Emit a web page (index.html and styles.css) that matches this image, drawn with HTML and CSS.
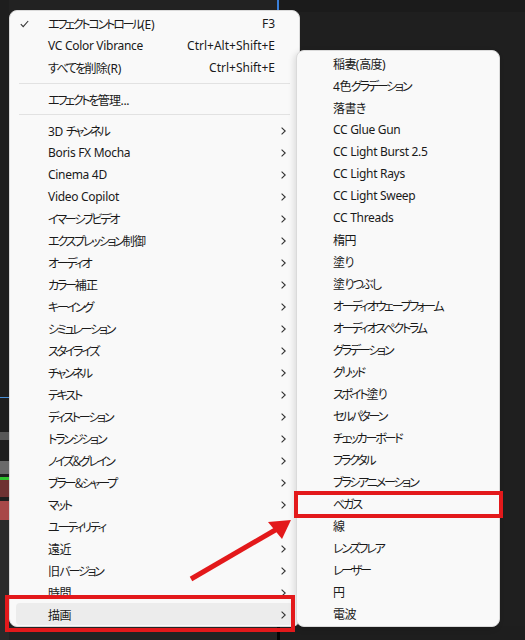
FILE: index.html
```html
<!DOCTYPE html>
<html lang="ja">
<head>
<meta charset="utf-8">
<link rel="stylesheet" href="styles.css">
</head>
<body>
<div class="scene">
  <div class="strip"></div>

  <div class="menu main">
    <div class="item"><span class="check"><svg width="9" height="8" viewBox="0 0 9 8"><polyline points="0.8,4.2 3.2,6.6 8.2,1" fill="none" stroke="#333" stroke-width="1.1"/></svg></span><span class="label">エフェクトコントロール<span class="en">(E)</span></span><span class="key">F3</span></div>
    <div class="item"><span class="check"></span><span class="label en">VC Color Vibrance</span><span class="key">Ctrl+Alt+Shift+E</span></div>
    <div class="item"><span class="check"></span><span class="label"><span class="hr">すべてを</span><span class="kj">削除</span><span class="en">(R)</span></span><span class="key">Ctrl+Shift+E</span></div>
    <div class="sep first"></div>
    <div class="item"><span class="check"></span><span class="label">エフェクト<span class="hr">を</span><span class="kj">管理</span><span class="en">...</span></span></div>
    <div class="sep"></div>
    <div class="item sub"><span class="check"></span><span class="label"><span class="en">3D </span>チャンネル</span><span class="chev"></span></div>
    <div class="item sub"><span class="check"></span><span class="label en">Boris FX Mocha</span><span class="chev"></span></div>
    <div class="item sub"><span class="check"></span><span class="label en">Cinema 4D</span><span class="chev"></span></div>
    <div class="item sub"><span class="check"></span><span class="label en">Video Copilot</span><span class="chev"></span></div>
    <div class="item sub"><span class="check"></span><span class="label">イマーシブビデオ</span><span class="chev"></span></div>
    <div class="item sub"><span class="check"></span><span class="label">エクスプレッション<span class="kj">制御</span></span><span class="chev"></span></div>
    <div class="item sub"><span class="check"></span><span class="label">オーディオ</span><span class="chev"></span></div>
    <div class="item sub"><span class="check"></span><span class="label">カラー<span class="kj">補正</span></span><span class="chev"></span></div>
    <div class="item sub"><span class="check"></span><span class="label">キーイング</span><span class="chev"></span></div>
    <div class="item sub"><span class="check"></span><span class="label">シミュレーション</span><span class="chev"></span></div>
    <div class="item sub"><span class="check"></span><span class="label">スタイライズ</span><span class="chev"></span></div>
    <div class="item sub"><span class="check"></span><span class="label">チャンネル</span><span class="chev"></span></div>
    <div class="item sub"><span class="check"></span><span class="label">テキスト</span><span class="chev"></span></div>
    <div class="item sub"><span class="check"></span><span class="label">ディストーション</span><span class="chev"></span></div>
    <div class="item sub"><span class="check"></span><span class="label">トランジション</span><span class="chev"></span></div>
    <div class="item sub"><span class="check"></span><span class="label">ノイズ＆グレイン</span><span class="chev"></span></div>
    <div class="item sub"><span class="check"></span><span class="label">ブラー＆シャープ</span><span class="chev"></span></div>
    <div class="item sub"><span class="check"></span><span class="label">マット</span><span class="chev"></span></div>
    <div class="item"><span class="check"></span><span class="label">ユーティリティ</span></div>
    <div class="item sub"><span class="check"></span><span class="label"><span class="kj">遠近</span></span><span class="chev"></span></div>
    <div class="item sub"><span class="check"></span><span class="label"><span class="kj">旧</span>バージョン</span><span class="chev"></span></div>
    <div class="item sub"><span class="check"></span><span class="label"><span class="kj">時間</span></span><span class="chev"></span></div>
    <div class="item sub active"><span class="check"></span><span class="label"><span class="kj">描画</span></span><span class="chev"></span></div>
  </div>

  <div class="menu submenu">
    <div class="item"><span class="label"><span class="kj">稲妻</span><span class="en">(</span><span class="kj">高度</span><span class="en">)</span></span></div>
    <div class="item"><span class="label"><span class="en">4</span><span class="kj">色</span>グラデーション</span></div>
    <div class="item"><span class="label"><span class="kj">落書</span><span class="hr">き</span></span></div>
    <div class="item"><span class="label en">CC Glue Gun</span></div>
    <div class="item"><span class="label en">CC Light Burst 2.5</span></div>
    <div class="item"><span class="label en">CC Light Rays</span></div>
    <div class="item"><span class="label en">CC Light Sweep</span></div>
    <div class="item"><span class="label en">CC Threads</span></div>
    <div class="item"><span class="label"><span class="kj">楕円</span></span></div>
    <div class="item"><span class="label"><span class="kj">塗</span><span class="hr">り</span></span></div>
    <div class="item"><span class="label"><span class="kj">塗</span><span class="hr">りつぶし</span></span></div>
    <div class="item"><span class="label">オーディオウェーブフォーム</span></div>
    <div class="item"><span class="label">オーディオスペクトラム</span></div>
    <div class="item"><span class="label">グラデーション</span></div>
    <div class="item"><span class="label">グリッド</span></div>
    <div class="item"><span class="label">スポイト<span class="kj">塗</span><span class="hr">り</span></span></div>
    <div class="item"><span class="label">セルパターン</span></div>
    <div class="item"><span class="label">チェッカーボード</span></div>
    <div class="item"><span class="label">フラクタル</span></div>
    <div class="item"><span class="label">ブラシアニメーション</span></div>
    <div class="item"><span class="label">ベガス</span></div>
    <div class="item"><span class="label"><span class="kj">線</span></span></div>
    <div class="item"><span class="label">レンズフレア</span></div>
    <div class="item"><span class="label">レーザー</span></div>
    <div class="item"><span class="label"><span class="kj">円</span></span></div>
    <div class="item"><span class="label"><span class="kj">電波</span></span></div>
  </div>

  <div class="mark mark-draw"></div>
  <div class="mark mark-vegas"></div>
  <svg class="arrow" width="525" height="640" viewBox="0 0 525 640">
    <line x1="191" y1="579" x2="277" y2="529" stroke="#e3191b" stroke-width="5"/>
    <polygon points="291,520 268,522 282,539" fill="#e3191b"/>
  </svg>
</div>
</body>
</html>
```

FILE: styles.css
```css
* { box-sizing: border-box; }
html, body { margin: 0; padding: 0; }
body {
  width: 525px;
  height: 640px;
  overflow: hidden;
  background: #1f1f1f;
  font-family: "Segoe UI", "Noto Sans", "Noto Sans CJK JP", sans-serif;
  font-size: 12px;
  color: #1a1a1a;
}
.scene {
  position: relative;
  width: 525px;
  height: 640px;
  background:
    linear-gradient(to right, #222 0, #222 277px, #3a7fd8 277px, #3a7fd8 279px, #1b1b1b 279px) top left / 525px 12px no-repeat,
    linear-gradient(to right, #232323 0, #232323 277px, #050505 277px, #050505 280px, #1e1e1e 280px) bottom left / 525px 14px no-repeat,
    #1f1f1f;
}
.strip {
  width: 9px;
  height: 640px;
  background: linear-gradient(to bottom,
    #1e1e1e 0, #1e1e1e 397px, #4a8fd6 397px, #4a8fd6 398px,
    #1e1e1e 398px, #1e1e1e 432px, #575757 432px, #575757 440px,
    #1e1e1e 440px, #1e1e1e 461px, #6a6a6a 461px, #6a6a6a 474px,
    #1e1e1e 474px, #1e1e1e 477px, #2fc12f 477px, #2fc12f 480px,
    #6e3232 480px, #6e3232 497px, #1e1e1e 497px, #1e1e1e 501px,
    #a84848 501px, #a84848 520px, #2a2a2a 520px);
}

.menu {
  position: absolute;
  background: #f9f9f9;
  border: 1px solid #dadada;
  border-radius: 8px;
  display: flex;
  flex-direction: column;
  font-feature-settings: "palt";
}
.main {
  left: 9px;
  top: 10px;
  width: 291px;
  height: 617px;
  padding: 1px 6px;
}
.submenu {
  left: 296px;
  top: 50px;
  width: 204px;
  height: 577px;
  padding: 1px 6px;
  box-shadow: -2px 2px 6px rgba(0,0,0,0.12);
}
.item {
  height: 22px;
  display: flex;
  align-items: center;
  flex: none;
  border-radius: 4px;
  white-space: nowrap;
  padding-top: 1px;
}
.check {
  width: 32px;
  flex: none;
  display: flex;
  justify-content: flex-start;
  padding-left: 4px;
}
.check svg { display: block; }
.label { flex: 1; letter-spacing: -2.2px; }
.label .en, .label.en { letter-spacing: -0.3px; }
.label .kj { letter-spacing: -0.6px; }
.label .hr { letter-spacing: -1.8px; }
.submenu .label { padding-left: 30px; }
.key {
  padding-right: 18px;
  color: #1a1a1a;
}
.chev {
  width: 14px;
  height: 22px;
  flex: none;
  margin-right: 3px;
  background: no-repeat center / 5px 8px url("data:image/svg+xml;utf8,<svg xmlns='http://www.w3.org/2000/svg' width='5' height='8' viewBox='0 0 5 8'><polyline points='0.6,0.6 4.2,4 0.6,7.4' fill='none' stroke='%23333' stroke-width='1.1'/></svg>");
}
.active { background: #ececec; }
.sep {
  flex: none;
  height: 9px;
  padding: 4px 3px;
}
.sep::after {
  content: "";
  display: block;
  height: 1px;
  background: #e2e2e2;
}
.sep.first { height: 10px; padding-top: 5px; }

.mark {
  position: absolute;
  border: 4px solid #e3191b;
}
.mark-draw { left: 5px; top: 595px; width: 290px; height: 37px; }
.mark-vegas { left: 294px; top: 491px; width: 209px; height: 27px; }
.arrow { position: absolute; left: 0; top: 0; }
```
